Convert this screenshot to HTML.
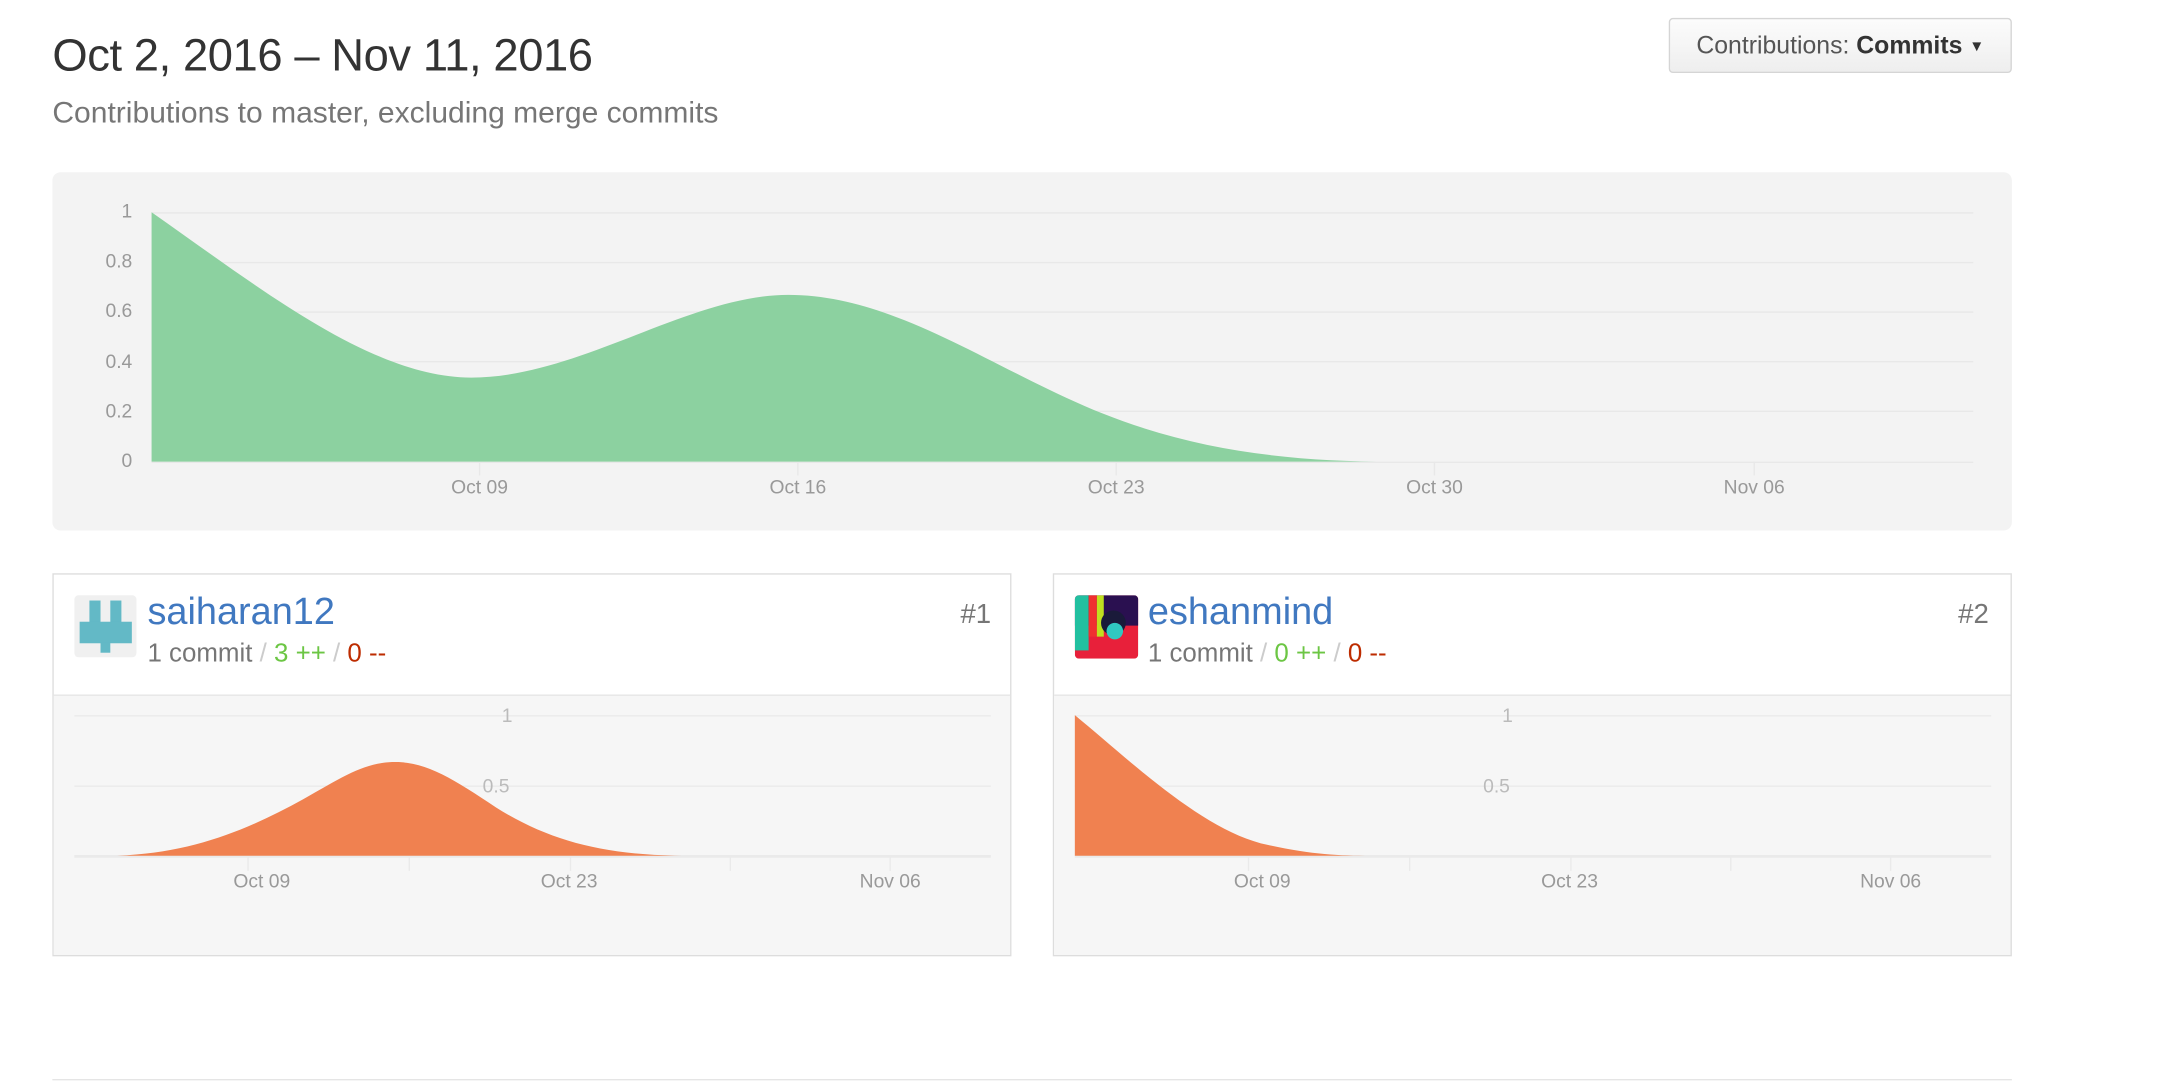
<!DOCTYPE html>
<html><head><meta charset="utf-8"><style>
html,body{margin:0;padding:0;background:#fff;width:2160px;height:1084px;overflow:hidden}
#w{position:absolute;left:0;top:0;width:1560px;height:786px;transform:scale(1.378);transform-origin:0 0;font-family:"Liberation Sans",Helvetica,Arial,sans-serif}
.a{position:absolute;white-space:nowrap}
</style></head><body><div id="w">
<div class="a" style="left:38px;top:21px;font-size:32.9px;color:#333;letter-spacing:-0.3px">Oct 2, 2016 – Nov 11, 2016</div>
<div class="a" style="left:38px;top:69px;font-size:21.8px;color:#767676">Contributions to master, excluding merge commits</div>
<div class="a" style="left:1211px;top:13px;width:247px;height:38px;border:1px solid #d5d5d5;border-radius:3px;background:linear-gradient(#fcfcfc,#eee);font-size:18px;color:#555;line-height:38px;text-align:center">Contributions: <b style="color:#333">Commits</b> <span style="font-size:11px;color:#333;position:relative;top:-2px">▼</span></div>

<svg class="a" style="left:0;top:0" width="1560" height="786" viewBox="0 0 1560 786">
<rect x="38" y="125" width="1422" height="260" rx="6" fill="#f3f3f3"/>
<g stroke="#e8e8e8" stroke-width="1">
<line x1="110" y1="154.5" x2="1432" y2="154.5"/><line x1="110" y1="190.5" x2="1432" y2="190.5"/><line x1="110" y1="226.5" x2="1432" y2="226.5"/><line x1="110" y1="262.5" x2="1432" y2="262.5"/><line x1="110" y1="298.5" x2="1432" y2="298.5"/><line x1="110" y1="335.5" x2="1432" y2="335.5"/>
<line x1="348" y1="335" x2="348" y2="345"/><line x1="579" y1="335" x2="579" y2="345"/><line x1="810" y1="335" x2="810" y2="345"/><line x1="1041" y1="335" x2="1041" y2="345"/><line x1="1273" y1="335" x2="1273" y2="345"/>
</g>
<path d="M110,154 C190,210 270,274 342,274 C420,274 500,214 572,214 C650,214 720,268 800,300 C870,328 940,335 1010,335 L110,335Z" fill="#8cd1a0"/>
<g font-size="14" fill="#999" text-anchor="end"><text x="96" y="158">1</text><text x="96" y="194">0.8</text><text x="96" y="230">0.6</text><text x="96" y="267">0.4</text><text x="96" y="303">0.2</text><text x="96" y="339">0</text></g>
<g font-size="14" fill="#999" text-anchor="middle"><text x="348" y="358">Oct 09</text><text x="579" y="358">Oct 16</text><text x="810" y="358">Oct 23</text><text x="1041" y="358">Oct 30</text><text x="1273" y="358">Nov 06</text></g>

<rect x="38.5" y="416.5" width="695" height="277" fill="#fff" stroke="#ddd"/>
<rect x="39" y="504" width="694" height="189" fill="#f6f6f6"/>
<line x1="39" y1="504.5" x2="733" y2="504.5" stroke="#e6e6e6"/>
<g stroke="#eaeaea"><line x1="54" y1="519.5" x2="719" y2="519.5"/><line x1="54" y1="570.5" x2="719" y2="570.5"/><line x1="54" y1="621.5" x2="719" y2="621.5" stroke-width="2"/>
<line x1="180" y1="621" x2="180" y2="632"/><line x1="297" y1="621" x2="297" y2="632"/><line x1="414" y1="621" x2="414" y2="632"/><line x1="530" y1="621" x2="530" y2="632"/><line x1="646" y1="621" x2="646" y2="632"/></g>
<path d="M85,621 C140,619 180,602 220,580 C250,563 265,553 287,553 C310,553 330,566 360,586 C400,611 440,621 500,621 Z" fill="#f08150"/>
<g font-size="14" fill="#bbb" text-anchor="middle"><text x="368" y="524">1</text><text x="360" y="575">0.5</text></g>
<g font-size="14" fill="#999" text-anchor="middle"><text x="190" y="644">Oct 09</text><text x="413" y="644">Oct 23</text><text x="646" y="644">Nov 06</text></g>
<rect x="54" y="432" width="45" height="45" rx="3" fill="#f0f0f0"/>
<g fill="#63b9c6" transform="translate(54,432) scale(0.2368)"><rect x="46" y="16" width="34" height="66"/><rect x="110" y="16" width="34" height="66"/><rect x="16" y="81" width="160" height="66"/><rect x="80" y="146" width="30" height="30"/></g>

<rect x="764.5" y="416.5" width="695" height="277" fill="#fff" stroke="#ddd"/>
<rect x="765" y="504" width="694" height="189" fill="#f6f6f6"/>
<line x1="765" y1="504.5" x2="1459" y2="504.5" stroke="#e6e6e6"/>
<g stroke="#eaeaea"><line x1="780" y1="519.5" x2="1445" y2="519.5"/><line x1="780" y1="570.5" x2="1445" y2="570.5"/><line x1="780" y1="621.5" x2="1445" y2="621.5" stroke-width="2"/>
<line x1="906" y1="621" x2="906" y2="632"/><line x1="1023" y1="621" x2="1023" y2="632"/><line x1="1140" y1="621" x2="1140" y2="632"/><line x1="1256" y1="621" x2="1256" y2="632"/><line x1="1372" y1="621" x2="1372" y2="632"/></g>
<path d="M780,519 C820,552 870,600 915,612 C950,620 970,621 995,621 L780,621Z" fill="#f08150"/>
<g font-size="14" fill="#bbb" text-anchor="middle"><text x="1094" y="524">1</text><text x="1086" y="575">0.5</text></g>
<g font-size="14" fill="#999" text-anchor="middle"><text x="916" y="644">Oct 09</text><text x="1139" y="644">Oct 23</text><text x="1372" y="644">Nov 06</text></g>
<clipPath id="c2"><rect x="780" y="432" width="46" height="46" rx="3"/></clipPath>
<g clip-path="url(#c2)"><rect x="780" y="432" width="46" height="46" fill="#e8203a"/><rect x="780" y="432" width="46" height="22" fill="#2a1050"/><rect x="780" y="432" width="10" height="40" fill="#22c0a0"/><rect x="790" y="432" width="6" height="30" fill="#f03030"/><rect x="796" y="432" width="5" height="30" fill="#c0e020"/><ellipse cx="808" cy="452" rx="9" ry="9" fill="#1a1a3a"/><ellipse cx="809" cy="458" rx="6" ry="6" fill="#30c8c0"/></g>
<line x1="38" y1="783.5" x2="1460" y2="783.5" stroke="#e5e5e5"/>
</svg>
<div class="a" style="left:107px;top:428px;font-size:27.5px;color:#4078c0">saiharan12</div>
<div class="a" style="left:107px;top:463px;font-size:18.8px;color:#767676">1 commit <span style="color:#ccc">/</span> <span style="color:#6cc644">3 ++</span> <span style="color:#ccc">/</span> <span style="color:#bd2c00">0 --</span></div>
<div class="a" style="left:697px;top:435px;font-size:20px;color:#767676">#1</div>
<div class="a" style="left:833px;top:428px;font-size:27.5px;color:#4078c0">eshanmind</div>
<div class="a" style="left:833px;top:463px;font-size:18.8px;color:#767676">1 commit <span style="color:#ccc">/</span> <span style="color:#6cc644">0 ++</span> <span style="color:#ccc">/</span> <span style="color:#bd2c00">0 --</span></div>
<div class="a" style="left:1421px;top:435px;font-size:20px;color:#767676">#2</div>
</div></body></html>
